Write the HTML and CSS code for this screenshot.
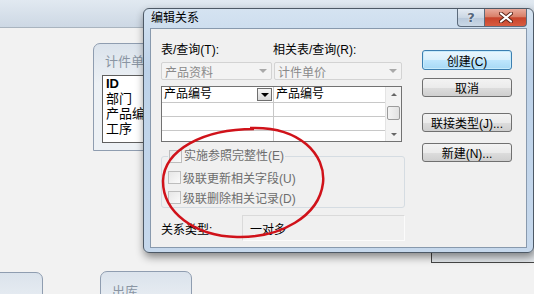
FILE: index.html
```html
<!DOCTYPE html>
<html lang="zh-CN">
<head>
  <meta charset="UTF-8" />
  <meta name="viewport" content="width=device-width, initial-scale=1.0"/>
  <title>编辑关系</title>
  <link rel="stylesheet" href="styles.css">
</head>
<body>
  <div class="appbar"></div>

  <!-- tables in the relationship diagram, behind the dialog -->
  <div class="node node-jj">
    <div class="node-title">计件单价</div>
    <ul class="node-fields">
      <li class="key">ID</li>
      <li>部门</li>
      <li>产品编号</li>
      <li>工序</li>
    </ul>
  </div>
  <div class="node node-left"></div>
  <div class="node node-ck"><div class="node-title">出库</div></div>
  <div class="node node-back"></div>

  <div class="dialog">
    <div class="titlebar">
      <span class="title">编辑关系</span>
      <button class="cap cap-help">?</button>
      <button class="cap cap-close">
        <svg width="14" height="11" viewBox="0 0 14 11">
          <path d="M2 1.5 L12 9.5 M12 1.5 L2 9.5" stroke="#5a2418" stroke-width="4" stroke-linecap="round"/>
          <path d="M2 1.5 L12 9.5 M12 1.5 L2 9.5" stroke="#fff" stroke-width="2.2" stroke-linecap="round"/>
        </svg>
      </button>
    </div>

    <div class="client">
      <div class="main">
        <div class="labels">
          <span class="lbl-left">表/查询(T):</span>
          <span>相关表/查询(R):</span>
        </div>

        <div class="combos">
          <div class="combo combo-left">产品资料<i class="arrow"></i></div>
          <div class="combo combo-right">计件单价<i class="arrow"></i></div>
        </div>

        <div class="grid">
          <div class="cells">
            <div class="cell head">产品编号<span class="dd"><i></i></span></div>
            <div class="cell">产品编号</div>
            <div class="cell"></div>
            <div class="cell"></div>
            <div class="cell"></div>
            <div class="cell"></div>
            <div class="cell last"></div>
            <div class="cell last"></div>
          </div>
          <div class="vscroll">
            <div class="sb-btn"><i class="up"></i></div>
            <div class="sb-thumb"></div>
            <div class="sb-fill"></div>
            <div class="sb-btn"><i class="down"></i></div>
          </div>
        </div>

        <fieldset class="opts">
          <legend><span class="chk"></span>实施参照完整性(E)</legend>
          <div class="opt"><span class="chk"></span>级联更新相关字段(U)</div>
          <div class="opt"><span class="chk"></span>级联删除相关记录(D)</div>
        </fieldset>

        <div class="reltype">
          <span class="reltype-lbl">关系类型:</span>
          <div class="reltype-val">一对多</div>
        </div>
      </div>

      <div class="actions">
        <button class="btn btn-default">创建(C)</button>
        <button class="btn btn-cancel">取消</button>
        <button class="btn btn-join">联接类型(J)...</button>
        <button class="btn btn-new">新建(N)...</button>
      </div>
    </div>
  </div>

  <svg class="mark" width="534" height="294" viewBox="0 0 534 294">
    <path d="M250 128 C300 126, 326 155, 323 183 C319 216, 281 238, 237 237 C194 236, 163 212, 163 181 C164 150, 203 129, 254 129"
          fill="none" stroke="#d0121a" stroke-width="2.5"/>
  </svg>
</body>
</html>
```

FILE: styles.css
```css
* {
  box-sizing: border-box;
}

body {
  margin: 0;
  width: 534px;
  height: 294px;
  position: relative;
  overflow: hidden;
  background: #f2f2f2;
  font-family: "Liberation Sans", "Noto Sans CJK SC", sans-serif;
  font-size: 12px;
  color: #000;
}

.appbar {
  height: 28px;
  background: linear-gradient(#e1e9f1, #cdd8e4);
  border-bottom: 1px solid #a9b4bf;
}

/* diagram tables */
.node {
  position: absolute;
  border: 1px solid #8f9db0;
  border-radius: 7px 7px 0 0;
  background: linear-gradient(#dbe3ec, #edf1f5 40px);
}

.node-title {
  padding: 10px 0 0 11px;
  color: #8a95a3;
  font-size: 13px;
  line-height: 15px;
}

.node-jj {
  left: 93px;
  top: 43px;
  width: 80px;
  height: 108px;
}

.node-fields {
  list-style: none;
  margin: 6px 0 0 8px;
  padding: 0 0 0 3px;
  height: 68px;
  background: #fff;
  border: 1px solid #5f5f5f;
  font-size: 13px;
  line-height: 15px;
}

.node-fields .key {
  font-weight: bold;
}

.node-left {
  left: -20px;
  top: 272px;
  width: 63px;
  height: 40px;
  border-radius: 0 7px 0 0;
}

.node-ck {
  left: 100px;
  top: 271px;
  width: 92px;
  height: 40px;
}

.node-ck .node-title {
  padding-top: 12px;
}

.node-back {
  left: 431px;
  top: 180px;
  width: 140px;
  height: 83px;
  border-color: #474747;
  border-radius: 0;
  background: #e4e8ec;
}

/* dialog window */
.dialog {
  position: absolute;
  left: 143px;
  top: 8px;
  width: 391px;
  height: 245px;
  padding: 0 6px 4px;
  border: 1px solid #4d5966;
  border-radius: 6px;
  background: linear-gradient(#d5e3f1, #bdd2e9 60px, #c6d8ec);
  box-shadow: 1px 4px 9px rgba(0, 0, 0, 0.45);
}

.titlebar {
  display: flex;
  height: 19px;
}

.title {
  padding-left: 1px;
  line-height: 19px;
}

.cap {
  height: 18px;
  padding: 0;
  border: 1px solid #5c6b7c;
  border-top: 0;
  display: flex;
  align-items: center;
  justify-content: center;
}

.cap-help {
  margin-left: auto;
  width: 27px;
  border-right: 0;
  border-radius: 0 0 0 4px;
  background: linear-gradient(#e4ebf3, #cbd7e4 50%, #b8c8da 51%, #cad8e6);
  color: #55677c;
  font: bold 13px "DejaVu Sans", sans-serif;
  text-shadow: 0 0 2px #fff;
}

.cap-close {
  width: 43px;
  border-radius: 0 0 4px 0;
  background: linear-gradient(#e9ab9d, #d98069 45%, #c8442c 52%, #d75c41);
}

.client {
  display: flex;
  height: 220px;
  padding: 14px 0 0 10px;
  border: 1px solid #8899ad;
  background: #f0f0f0;
}

.main {
  width: 244px;
}

.labels {
  display: flex;
  height: 14px;
  line-height: 14px;
}

.lbl-left {
  width: 112px;
}

.combos {
  display: flex;
  gap: 2px;
  margin-top: 5px;
}

.combo {
  display: flex;
  align-items: center;
  justify-content: space-between;
  height: 18px;
  padding: 0 4px 0 3px;
  border: 1px solid #d3d3d3;
  border-radius: 2px;
  background: #f3f3f3;
  color: #8a8a8a;
}

.combo-left {
  width: 111px;
}

.combo-right {
  width: 128px;
}

.arrow {
  border-top: 4px solid #a9a9a9;
  border-left: 4px solid transparent;
  border-right: 4px solid transparent;
}

.grid {
  display: flex;
  width: 241px;
  height: 56px;
  margin-top: 6px;
  border: 1px solid #727272;
  background: #fff;
}

.cells {
  display: grid;
  grid-template-columns: 112px 111px;
  grid-template-rows: 16px 14px 14px 10px;
}

.cell {
  padding-left: 2px;
  line-height: 15px;
  border-bottom: 1px solid #c8c8c8;
}

.cell:nth-child(odd) {
  border-right: 1px solid #c8c8c8;
}

.cell.last {
  border-bottom: 0;
}

.head {
  display: flex;
  align-items: center;
}

.dd {
  display: flex;
  align-items: center;
  justify-content: center;
  width: 15px;
  height: 13px;
  margin-left: auto;
  margin-right: 1px;
  border: 1px solid #6f6f6f;
  background: linear-gradient(#f6f6f6, #d8d8d8);
}

.dd i {
  border-top: 4px solid #000;
  border-left: 4px solid transparent;
  border-right: 4px solid transparent;
}

.vscroll {
  display: flex;
  flex-direction: column;
  width: 16px;
  border-left: 1px solid #e4e4e4;
  background: #f3f3f3;
}

.sb-btn {
  display: flex;
  align-items: center;
  justify-content: center;
  height: 14px;
}

.sb-btn .up {
  border-bottom: 3px solid #666;
  border-left: 3px solid transparent;
  border-right: 3px solid transparent;
}

.sb-btn .down {
  border-top: 3px solid #666;
  border-left: 3px solid transparent;
  border-right: 3px solid transparent;
}

.sb-thumb {
  height: 14px;
  margin: 5px 1px 0;
  border: 1px solid #9b9b9b;
  border-radius: 2px;
  background: linear-gradient(90deg, #f4f4f4, #e2e2e2);
}

.sb-fill {
  flex: 1;
}

.opts {
  width: 244px;
  height: 58px;
  margin: 8px 0 0;
  padding: 4px 6px 0;
  border: 1px solid #d5dce2;
  border-radius: 3px;
  min-inline-size: 0;
}

.opts legend {
  display: flex;
  align-items: center;
  padding: 0 1px;
  line-height: 13px;
  color: #6d6d6d;
}

.opt {
  display: flex;
  align-items: center;
  height: 20px;
  color: #6d6d6d;
}

.chk {
  width: 13px;
  height: 13px;
  margin-right: 2px;
  border: 1px solid #bdbdbd;
  background: linear-gradient(135deg, #e6e6e6, #fafafa);
}

.reltype {
  display: flex;
  align-items: center;
  height: 26px;
  margin-top: 7px;
}

.reltype-lbl {
  width: 81px;
}

.reltype-val {
  display: flex;
  align-items: center;
  width: 163px;
  height: 26px;
  padding-left: 7px;
  border: 1px solid #dadada;
  border-right-color: #fbfbfb;
  border-bottom-color: #fbfbfb;
}

.actions {
  display: flex;
  flex-direction: column;
  width: 90px;
  margin-left: 17px;
  padding-top: 7px;
}

.btn {
  height: 19px;
  padding: 0;
  border: 1px solid #707070;
  border-radius: 3px;
  background: linear-gradient(#f3f3f3, #ebebeb 50%, #dddddd 51%, #cfcfcf);
  font: inherit;
  color: #000;
}

.btn-default {
  height: 20px;
  border-color: #3c7fb1;
  background: linear-gradient(#eaf6fd, #d9f0fc 50%, #bee6fd 51%, #a7d9f5);
  box-shadow: inset 0 0 0 1px #c7ebfb;
}

.btn-cancel {
  margin-top: 8px;
}

.btn-join {
  margin-top: 16px;
}

.btn-new {
  margin-top: 11px;
}

.mark {
  position: absolute;
  left: 0;
  top: 0;
  pointer-events: none;
}
```
